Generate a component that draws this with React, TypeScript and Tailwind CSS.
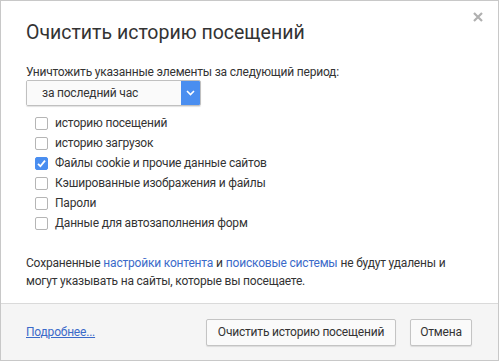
import React, { useState } from "react";

const items = [
  { label: "историю посещений", checked: false },
  { label: "историю загрузок", checked: false },
  { label: "Файлы cookie и прочие данные сайтов", checked: true },
  { label: "Кэшированные изображения и файлы", checked: false },
  { label: "Пароли", checked: false },
  { label: "Данные для автозаполнения форм", checked: false },
];

const Box: React.FC<{ checked: boolean; onClick: () => void }> = ({ checked, onClick }) => (
  <span
    onClick={onClick}
    className={`flex h-[13px] w-[13px] shrink-0 items-center justify-center rounded-[2px] border ${
      checked ? "border-[#4a8ef0] bg-[#4a8ef0]" : "border-[#b5b5b5] bg-white"
    }`}
  >
    {checked && (
      <svg width="11" height="11" viewBox="0 0 11 11">
        <path d="M2 5.8 L4.4 8.2 L9 2.6" fill="none" stroke="white" strokeWidth="1.8" />
      </svg>
    )}
  </span>
);

export default function App() {
  const [state, setState] = useState(items.map((i) => i.checked));

  return (
    <div
      className="flex h-[361px] w-[499px] flex-col border border-[#c8c8c8] bg-white text-[12px] tracking-[-0.2px] text-[#333]"
      style={{ fontFamily: "Roboto, sans-serif" }}
    >
      <div className="relative flex-1 px-[25px]">
        <button className="absolute right-[14px] top-[10px] text-[#b0b0b0]">
          <svg width="12" height="12" viewBox="0 0 12 12">
            <path d="M2 2 L10 10 M10 2 L2 10" stroke="currentColor" strokeWidth="2.2" />
          </svg>
        </button>
        <h1 className="pt-[19px] text-[19.5px] leading-[26px] tracking-normal text-[#333]">
          Очистить историю посещений
        </h1>

        <div className="mt-[19px] leading-[15px]">Уничтожить указанные элементы за следующий период:</div>
        <div className="flex h-[26px] w-[175px] overflow-hidden rounded-[2px] border border-[#c0c0c0] shadow-[0_1px_1px_rgba(0,0,0,0.12)]">
          <div className="flex flex-1 items-center bg-[#fafafa] pl-[15px] leading-none">за последний час</div>
          <div className="flex w-[19px] items-center justify-center bg-[#4a8ef0]">
            <svg width="9" height="6" viewBox="0 0 9 6">
              <path d="M1 1 L4.5 4.5 L8 1" fill="none" stroke="white" strokeWidth="1.6" />
            </svg>
          </div>
        </div>

        <div className="mt-[7px] flex flex-col pl-[9px]">
          {items.map((it, i) => (
            <label key={it.label} className="flex h-[20px] items-center gap-[7px]">
              <Box
                checked={state[i]}
                onClick={() => setState((s) => s.map((v, j) => (j === i ? !v : v)))}
              />
              <span>{it.label}</span>
            </label>
          ))}
        </div>

        <div className="mt-[21px] leading-[18px]">
          <div className="flex gap-[3px] whitespace-nowrap">
            <span>Сохраненные</span>
            <a className="text-[#3b6ac9]">настройки контента</a>
            <span>и</span>
            <a className="text-[#3b6ac9]">поисковые системы</a>
            <span>не будут удалены и</span>
          </div>
          <div>могут указывать на сайты, которые вы посещаете.</div>
        </div>
      </div>

      <div className="flex h-[57px] items-center border-t border-[#dadada] bg-[#f5f5f5] pl-[25px] pr-[26px]">
        <a className="text-[#3b6ac9] underline">Подробнее...</a>
        <div className="ml-auto flex gap-[14px]">
          <button className="h-[27px] w-[190px] rounded-[2px] border border-[#c4c4c4] bg-[#fafafa] shadow-[0_1px_1px_rgba(0,0,0,0.1)]">
            Очистить историю посещений
          </button>
          <button className="h-[27px] w-[62px] rounded-[2px] border border-[#c4c4c4] bg-[#fafafa] shadow-[0_1px_1px_rgba(0,0,0,0.1)]">
            Отмена
          </button>
        </div>
      </div>
    </div>
  );
}
